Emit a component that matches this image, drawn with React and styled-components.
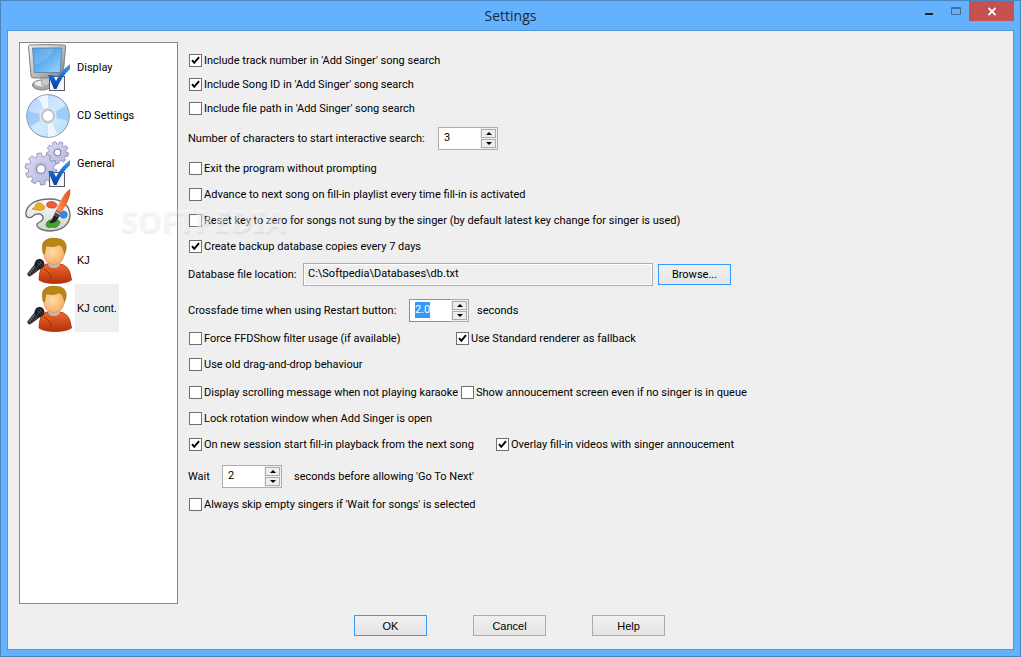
import React, { useEffect, useRef, useState } from 'react';
import styled, { createGlobalStyle } from 'styled-components';

const GlobalStyle = createGlobalStyle`
  * {
    box-sizing: border-box;
  }

  body {
    margin: 0;
    font-family: Roboto, 'Liberation Sans', sans-serif;
    font-size: 11px;
    line-height: 16px;
    color: #000;
  }

  button,
  input {
    font: inherit;
    color: inherit;
  }
`;

const Window = styled.div`
  position: relative;
  display: flex;
  flex-direction: column;
  min-height: 100vh;
  padding: 0 6px 6px;
  background: #64b1fe;
  border: 1px solid #4a86c2;
`;

const TitleBar = styled.header`
  display: grid;
  grid-template-columns: 1fr auto 1fr;
  align-items: start;
  height: 29px;
`;

const Title = styled.h1`
  grid-column: 2;
  margin: 0;
  font-family: 'Open Sans', sans-serif;
  font-size: 14px;
  font-weight: 400;
  line-height: 30px;
  color: #1c2833;
`;

const WindowButtons = styled.div`
  display: flex;
  justify-content: flex-end;
`;

const WindowButton = styled.button`
  display: block;
  width: ${(props) => (props.$close ? '45px' : '27px')};
  height: 20px;
  padding: 0;
  border: 0;
  background: ${(props) => (props.$close ? '#c75050' : 'transparent')};

  svg {
    display: block;
    margin: 0 auto;
  }
`;

const Client = styled.main`
  display: flex;
  flex-direction: column;
  flex: 1;
  padding: 11px 11px 13px;
  background: #efefef;
  border: 1px solid #5294d4;
`;

const Body = styled.div`
  display: flex;
  flex: 1;
  gap: 10px;
`;

const Sidebar = styled.nav`
  flex: 0 0 159px;
  padding: 1px 4px;
  background: #fff;
  border: 1px solid #828790;
`;

const NavItem = styled.button`
  display: flex;
  align-items: center;
  gap: 3px;
  height: 48px;
  padding: 0;
  border: 0;
  background: none;

  svg {
    display: block;
  }
`;

const NavLabel = styled.span`
  padding: 0 2px;
  line-height: 48px;
  white-space: nowrap;
  background: ${(props) => (props.$active ? '#efefef' : 'transparent')};
  font-family: ${(props) => (props.$plain ? "'Liberation Sans', sans-serif" : 'inherit')};
`;

const Form = styled.form`
  flex: 1;
  min-width: 0;
  padding-top: 11px;
`;

const gaps = { small: '9px', medium: '11px', large: '13px' };

const Row = styled.div`
  display: flex;
  align-items: center;
  height: ${(props) => (props.$tall ? '23px' : '15px')};
  margin-top: ${(props) => gaps[props.$gap] || '0'};
`;

const FieldLabel = styled.label`
  flex: 0 0 ${(props) => props.$width}px;
  white-space: nowrap;
`;

const Suffix = styled.span`
  margin-left: ${(props) => (props.$wide ? '12px' : '8px')};
  white-space: nowrap;
`;

const CheckLabel = styled.label`
  display: flex;
  align-items: center;
  gap: 2px;
  flex: 0 0 ${(props) => (props.$width ? `${props.$width}px` : 'auto')};
  padding-left: 1px;
  white-space: nowrap;
`;

const CheckBox = styled.span`
  position: relative;
  width: 13px;
  height: 13px;

  input {
    display: block;
    appearance: none;
    width: 13px;
    height: 13px;
    margin: 0;
    background: #fff;
    border: 1px solid #707070;
  }

  svg {
    position: absolute;
    inset: 0;
    display: none;
    pointer-events: none;
  }

  input:checked + svg {
    display: block;
  }
`;

const Spinner = styled.span`
  display: flex;
  width: 60px;
  height: 23px;
`;

const SpinInput = styled.input`
  flex: 1;
  min-width: 0;
  padding: 0 0 2px 5px;
  background: #fff;
  border: 1px solid #abadb3;
  border-right: 0;
  border-radius: 0;
  outline: none;

  &:focus {
    border-color: #569de5;
  }

  &::selection {
    background: #3399ff;
    color: #fff;
  }
`;

const SpinButtons = styled.span`
  display: flex;
  flex-direction: column;
  gap: 1px;
  width: 18px;
  padding: 1px;
  border: 1px solid #abadb3;
  border-left: 0;
`;

const SpinButton = styled.button`
  display: flex;
  align-items: center;
  justify-content: center;
  flex: 1;
  padding: 0;
  background: #ededed;
  border: 1px solid #acacac;
`;

const PathInput = styled.input`
  width: 350px;
  height: 23px;
  margin-right: 5px;
  padding: 0 4px 3px;
  background: #efefef;
  border: 1px solid #abadb3;
  border-radius: 0;
  box-shadow: inset 0 0 0 1px #fff;
  outline: none;
`;

const PushButton = styled.button`
  width: 73px;
  height: 21px;
  padding: 0;
  background: linear-gradient(#f0f0f0, #e5e5e5);
  border: 1px solid ${(props) => (props.$highlight ? '#3399ff' : '#acacac')};
  font-family: ${(props) => (props.$plain ? "'Liberation Sans', sans-serif" : 'inherit')};
`;

const Footer = styled.footer`
  display: flex;
  justify-content: center;
  gap: 46px;
  margin-top: 11px;
  padding-right: 2px;
`;

const Watermark = styled.div`
  position: absolute;
  left: 119px;
  top: 200px;
  font-family: 'Noto Sans', sans-serif;
  font-size: 30px;
  font-weight: 800;
  line-height: 40px;
  color: rgba(255, 255, 255, 0.45);
  text-shadow: 1px 2px 2px rgba(0, 0, 0, 0.07);
  pointer-events: none;

  sup {
    font-size: 10px;
    line-height: 10px;
    vertical-align: 12px;
  }
`;

const TickOverlay = () => (
    <g>
        <rect x="25.5" y="32.5" width="15" height="14" fill="#f4f4f8" stroke="#5a5a62" />
        <path d="M24 31 L29 31 L32 37 Q37 27 46 20 L46 25 Q38 32 32.5 45 L30 45 Z" fill="url(#tick)" />
    </g>
);

const DisplayIcon = () => (
    <svg width="48" height="48" viewBox="0 0 48 48" aria-hidden="true">
        <defs>
            <linearGradient id="screen" x1="0" y1="0" x2="1" y2="1">
                <stop offset="0" stopColor="#3b8fdc" />
                <stop offset="0.5" stopColor="#5fb0f0" />
                <stop offset="1" stopColor="#9fd8ff" />
            </linearGradient>
            <linearGradient id="bezel" x1="0" y1="0" x2="1" y2="1">
                <stop offset="0" stopColor="#f2f2f2" />
                <stop offset="0.6" stopColor="#b4b4b4" />
                <stop offset="1" stopColor="#777" />
            </linearGradient>
            <linearGradient id="tick" x1="0" y1="0" x2="0" y2="1">
                <stop offset="0" stopColor="#3f9df0" />
                <stop offset="0.6" stopColor="#0f5fc6" />
                <stop offset="1" stopColor="#0a3f9c" />
            </linearGradient>
        </defs>
        <ellipse cx="18" cy="41" rx="9.5" ry="5" fill="#a8a8a8" stroke="#7a7a7a" />
        <ellipse cx="18" cy="39.5" rx="7.5" ry="3" fill="#ececec" />
        <path d="M17 33 H26 L25 41 Q21 43 18 41 Z" fill="#c8c8c8" stroke="#888" strokeWidth="0.6" />
        <path
            d="M6 1 Q24 0 40 1 Q42 1 41.6 3 L39 32 Q39 34 36 34 L10 34 Q7 34 7 32 L4.6 3 Q4.6 1 6 1 Z"
            fill="url(#bezel)"
            stroke="#808080"
        />
        <path d="M8.5 4 L38 4 L36 28.5 L10.5 28.5 Z" fill="url(#screen)" stroke="#5b7fa8" strokeWidth="0.8" />
        <path d="M9 4.5 L30 4.5 Q26 17 10 21 Z" fill="#fff" opacity="0.16" />
        <TickOverlay />
    </svg>
);

const DiscIcon = () => (
    <svg width="48" height="48" viewBox="0 0 48 48" aria-hidden="true">
        <defs>
            <linearGradient id="disc" x1="0" y1="0" x2="1" y2="1">
                <stop offset="0" stopColor="#b5cffa" />
                <stop offset="0.5" stopColor="#cfeaff" />
                <stop offset="1" stopColor="#b8dcf2" />
            </linearGradient>
        </defs>
        <circle cx="24" cy="24" r="21.3" fill="url(#disc)" stroke="#8794a8" />
        <path d="M24 24 L14 5.5 Q18 3.2 24 3 Z" fill="#fff" opacity="0.7" />
        <path d="M24 24 L34 42.5 Q30 44.8 24 45 Z" fill="#fff" opacity="0.7" />
        <path d="M24 24 L3.4 19 Q2.5 29 6 34.5 Z" fill="#7fb9f5" opacity="0.55" />
        <path d="M24 24 L44.6 29 Q45.5 19 42 13.5 Z" fill="#7fb9f5" opacity="0.55" />
        <circle cx="24" cy="24" r="8.5" fill="#e4f0fa" />
        <circle cx="24" cy="24" r="6.2" fill="#fff" stroke="#c3c6ca" strokeWidth="2.4" />
    </svg>
);

const gearPath = (cx, cy, outer, inner, teeth) => {
    const points = [];
    const step = (Math.PI * 2) / teeth;
    for (let i = 0; i < teeth; i += 1) {
        [[-0.34, inner], [-0.22, outer], [0.22, outer], [0.34, inner]].forEach(([shift, radius]) => {
            const angle = (i + shift) * step + 0.2;
            points.push(`${(cx + Math.cos(angle) * radius).toFixed(2)} ${(cy + Math.sin(angle) * radius).toFixed(2)}`);
        });
    }
    return `M${points.join('L')}Z`;
};

const GearsIcon = () => (
    <svg width="48" height="48" viewBox="0 0 48 48" aria-hidden="true">
        <defs>
            <linearGradient id="gear" x1="0" y1="0" x2="1" y2="1">
                <stop offset="0" stopColor="#dcdef6" />
                <stop offset="1" stopColor="#b2b5dc" />
            </linearGradient>
        </defs>
        <g fill="url(#gear)" stroke="#8688b0" strokeWidth="0.8" strokeLinejoin="round">
            <path d={gearPath(33.5, 12.5, 11, 8.6, 9)} />
            <path d={gearPath(17, 29, 16, 12.6, 10)} />
        </g>
        <circle cx="33.5" cy="12.5" r="5.2" fill="#c3c5e6" />
        <circle cx="33.5" cy="12.5" r="3.4" fill="#fff" stroke="#7375a0" />
        <circle cx="17" cy="29" r="7.5" fill="#bfc1e4" />
        <circle cx="17" cy="29" r="4.4" fill="#fff" stroke="#7375a0" />
        <TickOverlay />
    </svg>
);

const PaletteIcon = () => (
    <svg width="48" height="48" viewBox="0 0 48 48" aria-hidden="true">
        <defs>
            <linearGradient id="palette" x1="0" y1="0" x2="0" y2="1">
                <stop offset="0" stopColor="#fff" />
                <stop offset="1" stopColor="#cfcfcf" />
            </linearGradient>
            <linearGradient id="brush" x1="0" y1="0" x2="1" y2="0">
                <stop offset="0" stopColor="#ff9a5c" />
                <stop offset="1" stopColor="#e4501c" />
            </linearGradient>
        </defs>
        <path
            d="M2 24 C4 15 14 11 26 11 C38 11 46 18 46 27 C46 37 37 43 26 43 C17 43 12 39 13 36 C14 34 19 34 19 30 C19 25 12 25 9 28 C6 31 1 30 2 24 Z"
            fill="url(#palette)"
            stroke="#6c6c6c"
            strokeWidth="1.3"
        />
        <path d="M8 21 Q11 20 12 16 Q16 13 19 17 Q23 19 19 22 Q14 23 8 21 Z" fill="#e6b022" stroke="#b98611" strokeWidth="0.6" />
        <path d="M22.5 17 Q23 13 28 13.5 Q33 14 33 18 Q31 21 27 20 Q23 20 22.5 17 Z" fill="#f0583a" stroke="#c03a22" strokeWidth="0.6" />
        <path d="M36 25 Q40 21 43 25 Q44 30 40 30 Q36 31 36 25 Z" fill="#2f8cea" stroke="#1665b8" strokeWidth="0.6" />
        <path d="M22 36 Q24 31 29 32 Q36 31 36 35 Q33 41 28 39 Q22 41 22 36 Z" fill="#3ca627" stroke="#247716" strokeWidth="0.6" />
        <path d="M46 1 Q47.5 5 43 15 L37 25 L32 22 L37 12 Q41 4 46 1 Z" fill="url(#brush)" />
        <path d="M32 22 L37 25 L35 30 L30 27 Z" fill="#4a4a4a" />
        <path d="M31.4 23.6 L36.2 26.5" stroke="#ddd" strokeWidth="1.2" />
        <path d="M30 27 L34.5 29.5 Q32 36 25 35 Q28 32 30 27 Z" fill="#222" />
    </svg>
);

const SingerIcon = ({ id }) => (
    <svg width="48" height="48" viewBox="0 0 48 48" aria-hidden="true">
        <defs>
            <linearGradient id={`${id}-shirt`} x1="0" y1="0" x2="0" y2="1">
                <stop offset="0" stopColor="#ee6a2a" />
                <stop offset="1" stopColor="#b52f0b" />
            </linearGradient>
            <radialGradient id={`${id}-face`} cx="0.4" cy="0.4" r="0.7">
                <stop offset="0" stopColor="#ffdca8" />
                <stop offset="1" stopColor="#f7a859" />
            </radialGradient>
        </defs>
        <path
            d="M15 44 Q15 31 22 28 L36 28 Q46 29 47.5 44 Q42 47.5 31 47.5 Q20 47.5 15 44 Z"
            fill={`url(#${id}-shirt)`}
            stroke="#a5330f"
            strokeWidth="0.8"
        />
        <path d="M24 28 H36 Q35 32 30 32 Q25 32 24 28 Z" fill="#b9bcc4" />
        <path d="M20 15 Q19 28 29.5 28.5 Q40 29 41 14 L38 7 L23 7 Z" fill={`url(#${id}-face)`} stroke="#d88a3a" strokeWidth="0.6" />
        <path
            d="M19 17 Q17 7 21 4.5 Q26 1 33 2.5 Q42 3 42.3 11 Q42 15 40.5 18 Q40 11 35 8.5 Q30 12 22 9.5 Q21 13 20.5 18 Z"
            fill="#b8870f"
            stroke="#93690a"
            strokeWidth="0.6"
        />
        <path d="M20 33 Q26 36 27 43" fill="none" stroke="#8f2a0a" strokeWidth="0.9" />
        <path d="M11.5 27 L17 32.5 L6 40.5 Q3 40 3.4 37.5 Z" fill="#33363b" />
        <path d="M11 30 L5 38" stroke="#777b82" strokeWidth="1" />
        <circle cx="15.5" cy="28" r="4.9" fill="#1c1d20" />
        <path d="M12.5 26 L18 31 M14.5 24.5 L19 29 M18 25 L13 31" stroke="#666a70" strokeWidth="0.6" />
    </svg>
);

const pages = [
    { name: 'Display', icon: <DisplayIcon /> },
    { name: 'CD Settings', icon: <DiscIcon /> },
    { name: 'General', icon: <GearsIcon /> },
    { name: 'Skins', icon: <PaletteIcon /> },
    { name: 'KJ', icon: <SingerIcon id="kj" />, plain: true },
    { name: 'KJ cont.', icon: <SingerIcon id="kj-cont" />, plain: true },
];

const Check = ({ label, checked = false, width }) => (
    <CheckLabel $width={width}>
        <CheckBox>
            <input type="checkbox" defaultChecked={checked} />
            <svg width="13" height="13" viewBox="0 0 13 13" aria-hidden="true">
                <path d="M3 6.2 L5.3 8.8 L10 3.2" fill="none" stroke="#000" strokeWidth="2" />
            </svg>
        </CheckBox>
        {label}
    </CheckLabel>
);

const NumberSpinner = ({ id, initial, step = 1, digits = 0, selected = false }) => {
    const [value, setValue] = useState(initial);
    const inputRef = useRef(null);

    useEffect(() => {
        if (selected) {
            inputRef.current.focus();
            inputRef.current.select();
        }
    }, [selected]);

    const change = (amount) => setValue((Math.max(0, Number(value) + amount)).toFixed(digits));

    return (
        <Spinner>
            <SpinInput id={id} ref={inputRef} type="text" value={value} onChange={(e) => setValue(e.target.value)} />
            <SpinButtons>
                <SpinButton type="button" aria-label="Increase" onClick={() => change(step)}>
                    <svg width="6" height="3" viewBox="0 0 6 3"><path d="M0 3 L3 0 L6 3 Z" /></svg>
                </SpinButton>
                <SpinButton type="button" aria-label="Decrease" onClick={() => change(-step)}>
                    <svg width="6" height="3" viewBox="0 0 6 3"><path d="M0 0 L3 3 L6 0 Z" /></svg>
                </SpinButton>
            </SpinButtons>
        </Spinner>
    );
};

const App = () => {
    const [page, setPage] = useState('KJ cont.');

    return (
        <>
            <GlobalStyle />
            <Window>
                <TitleBar>
                    <Title>Settings</Title>
                    <WindowButtons>
                        <WindowButton aria-label="Minimize">
                            <svg width="27" height="20"><path d="M10 12 H18 V14 H10 Z" fill="#222" /></svg>
                        </WindowButton>
                        <WindowButton aria-label="Maximize">
                            <svg width="27" height="20">
                                <path d="M9.5 6.5 H18.5 V13.5 H9.5 Z M9 7.5 H19" fill="none" stroke="#446f99" />
                            </svg>
                        </WindowButton>
                        <WindowButton $close aria-label="Close">
                            <svg width="45" height="20">
                                <path d="M19.5 7 L26.5 14 M26.5 7 L19.5 14" stroke="#fff" strokeWidth="1.8" />
                            </svg>
                        </WindowButton>
                    </WindowButtons>
                </TitleBar>

                <Client>
                    <Body>
                        <Sidebar>
                            {pages.map((item) => (
                                <NavItem key={item.name} type="button" onClick={() => setPage(item.name)}>
                                    {item.icon}
                                    <NavLabel $active={item.name === page} $plain={item.plain}>{item.name}</NavLabel>
                                </NavItem>
                            ))}
                        </Sidebar>

                        <Form>
                            <Row>
                                <Check checked label="Include track number in 'Add Singer' song search" />
                            </Row>
                            <Row $gap="small">
                                <Check checked label="Include Song ID in 'Add Singer' song search" />
                            </Row>
                            <Row $gap="small">
                                <Check label="Include file path in 'Add Singer' song search" />
                            </Row>
                            <Row $tall $gap="medium">
                                <FieldLabel htmlFor="characters" $width={250}>
                                    Number of characters to start interactive search:
                                </FieldLabel>
                                <NumberSpinner id="characters" initial="3" />
                            </Row>
                            <Row $gap="medium">
                                <Check label="Exit the program without prompting" />
                            </Row>
                            <Row $gap="medium">
                                <Check label="Advance to next song on fill-in playlist every time fill-in is activated" />
                            </Row>
                            <Row $gap="medium">
                                <Check label="Reset key to zero for songs not sung by the singer (by default latest key change for singer is used)" />
                            </Row>
                            <Row $gap="medium">
                                <Check checked label="Create backup database copies every 7 days" />
                            </Row>
                            <Row $tall $gap="small">
                                <FieldLabel htmlFor="database" $width={115}>Database file location:</FieldLabel>
                                <PathInput id="database" type="text" readOnly value="C:\Softpedia\Databases\db.txt" />
                                <PushButton type="button" $highlight>Browse...</PushButton>
                            </Row>
                            <Row $tall $gap="large">
                                <FieldLabel htmlFor="crossfade" $width={221}>
                                    Crossfade time when using Restart button:
                                </FieldLabel>
                                <NumberSpinner id="crossfade" initial="2.0" step={0.1} digits={1} selected />
                                <Suffix>seconds</Suffix>
                            </Row>
                            <Row $gap="small">
                                <Check width={267} label="Force FFDShow filter usage (if available)" />
                                <Check checked label="Use Standard renderer as fallback" />
                            </Row>
                            <Row $gap="medium">
                                <Check label="Use old drag-and-drop behaviour" />
                            </Row>
                            <Row $gap="large">
                                <Check width={272} label="Display scrolling message when not playing karaoke" />
                                <Check label="Show annoucement screen even if no singer is in queue" />
                            </Row>
                            <Row $gap="medium">
                                <Check label="Lock rotation window when Add Singer is open" />
                            </Row>
                            <Row $gap="medium">
                                <Check checked width={307} label="On new session start fill-in playback from the next song" />
                                <Check checked label="Overlay fill-in videos with singer annoucement" />
                            </Row>
                            <Row $tall $gap="large">
                                <FieldLabel htmlFor="wait" $width={34}>Wait</FieldLabel>
                                <NumberSpinner id="wait" initial="2" />
                                <Suffix $wide>seconds before allowing 'Go To Next'</Suffix>
                            </Row>
                            <Row $gap="small">
                                <Check label="Always skip empty singers if 'Wait for songs' is selected" />
                            </Row>
                        </Form>
                    </Body>

                    <Footer>
                        <PushButton type="button" $plain $highlight>OK</PushButton>
                        <PushButton type="button" $plain>Cancel</PushButton>
                        <PushButton type="button" $plain>Help</PushButton>
                    </Footer>
                </Client>

                <Watermark aria-hidden="true">SOFTPEDIA<sup>®</sup></Watermark>
            </Window>
        </>
    );
};

export default App;
